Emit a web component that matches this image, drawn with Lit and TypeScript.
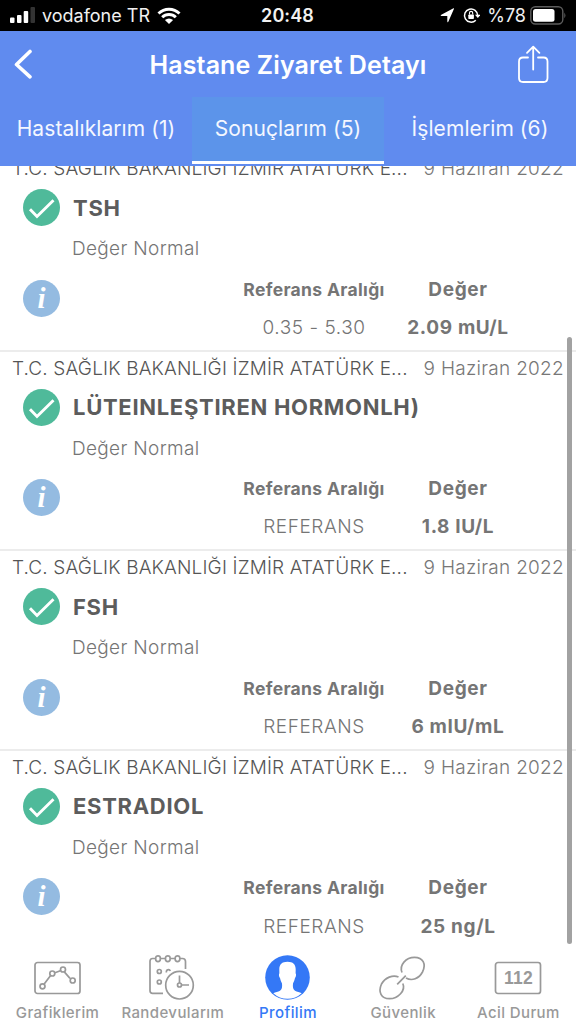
import { LitElement, html, css, svg } from 'lit';
import { customElement, property } from 'lit/decorators.js';
import { classMap } from 'lit/directives/class-map.js';

interface Result {
  name: string;
  status: string;
  range: string;
  value: string;
}

const HOSPITAL = 'T.C. SAĞLIK BAKANLIĞI İZMİR ATATÜRK E...';
const DATE = '9 Haziran 2022';

const RESULTS: Result[] = [
  { name: 'TSH', status: 'Değer Normal', range: '0.35 - 5.30', value: '2.09 mU/L' },
  { name: 'LÜTEINLEŞTIREN HORMONLH)', status: 'Değer Normal', range: 'REFERANS', value: '1.8 IU/L' },
  { name: 'FSH', status: 'Değer Normal', range: 'REFERANS', value: '6 mIU/mL' },
  { name: 'ESTRADIOL', status: 'Değer Normal', range: 'REFERANS', value: '25 ng/L' },
];

const TABS = [
  { label: 'Hastalıklarım (1)', active: false },
  { label: 'Sonuçlarım (5)', active: true },
  { label: 'İşlemlerim (6)', active: false },
];

const chartIcon = svg`
  <rect x="8" y="8.5" width="45" height="31" rx="2.5"/>
  <path d="M17 30.300 23.800 21.200M28 18.700 33.300 16.700M37.300 17.900 43 24.400"/>
  <circle cx="15.500" cy="32.300" r="2.500"/><circle cx="25.300" cy="19.500" r="2.500"/>
  <circle cx="36" cy="15.500" r="2.500"/><circle cx="45.700" cy="26.500" r="2.500"/>`;

const calendarIcon = svg`
  <path d="M20 39.300H9.500Q7 39.300 7 36.800V7.300Q7 4.500 9.500 4.500H12.500M17.500 4.500H22.500M27.500 4.500H32M37 4.500H39.500Q42.500 4.500 42.500 7.500V15"/>
  <rect x="12.700" y="1.800" width="4.600" height="5.800" rx="2.300"/>
  <rect x="22.500" y="1.800" width="4.600" height="5.800" rx="2.300"/>
  <rect x="32.200" y="1.800" width="4.600" height="5.800" rx="2.300"/>
  <circle cx="16.300" cy="17.500" r="2"/><path d="M23.500 18.500A2 2 0 1 1 27.300 17"/>
  <circle cx="16.300" cy="28" r="2"/>
  <circle cx="36.500" cy="31.200" r="13.800"/>
  <circle cx="36.500" cy="31" r="2"/><path d="M36.500 29V21.500M38.500 31H46"/>`;

const profileIcon = svg`
  <circle class="solid" cx="30.500" cy="23.500" r="22.300"/>
  <path class="cut" d="M30.500 7.800C25 7.800 22.200 10.500 22.300 15.500C22.300 17.500 22.500 18.500 22.300 19.500C21.600 20.300 22 23 23 24C23.600 26.500 24.300 28 25 29.500C25.400 33 25 35.500 23 36.800C21 38 18.500 38 16.300 39.300A21 21 0 0 0 44.700 39.300C42.500 38 40 38 38 36.800C36 35.500 35.600 33 36 29.500C36.700 28 37.400 26.500 38 24C39 23 39.400 20.300 38.700 19.500C38.500 18.500 38.700 17.500 38.700 15.500C38.800 10.500 36 7.800 30.500 7.800Z"/>`;

const linkIcon = svg`
  <path d="M34 24C40 27.500 47 24.500 50.500 18C54.500 10 51 3.300 42.500 3.300C34 3.300 27 11 30 18.500"/>
  <path d="M26.500 23C21 20.500 13 23.500 9.500 30C6 38 9 44.700 17.500 44.700C26 44.700 34 36.500 30.800 29.500"/>
  <path d="M25.200 30.300 33.800 21.700"/>`;

const emergencyIcon = svg`
  <rect x="7.500" y="8.500" width="45" height="31" rx="2.500"/>
  <text x="30.500" y="30">112</text>`;

const NAV = [
  { label: 'Grafiklerim', icon: chartIcon, width: 62, active: false },
  { label: 'Randevularım', icon: calendarIcon, width: 60, active: false },
  { label: 'Profilim', icon: profileIcon, width: 62, active: true },
  { label: 'Güvenlik', icon: linkIcon, width: 62, active: false },
  { label: 'Acil Durum', icon: emergencyIcon, width: 60, active: false },
];

@customElement('status-bar')
export class StatusBar extends LitElement {
  static styles = css`
    :host {
      display: grid;
      grid-template-columns: 1fr auto 1fr;
      align-items: center;
      height: 31px;
      padding: 0 10px 0 10px;
      background: #000;
      color: #f1f1f1;
      font-size: 18px;
    }
    .side {
      display: flex;
      align-items: center;
    }
    .right {
      justify-content: flex-end;
    }
    .signal {
      margin-bottom: 1px;
    }
    .carrier {
      margin: 0 7px 0 7px;
    }
    .time {
      margin-right: 1px;
      font-weight: 600;
      font-size: 18px;
      letter-spacing: 0.1px;
    }
    .battery-label {
      margin: 0 4px 0 7px;
    }
    svg {
      display: block;
      fill: #fff;
    }
    .dim {
      fill: #333;
    }
    .line {
      fill: none;
      stroke: #fff;
    }
    .case {
      fill: none;
      stroke: #5c5c5c;
    }
    .tip {
      fill: #5c5c5c;
    }
  `;

  render() {
    return html`
      <div class="side">
        <svg class="signal" width="25" height="17" viewBox="0 0 25 17">
          <rect y="10.500" width="4.500" height="5.500" rx="1"/>
          <rect x="7" y="8" width="4.500" height="8" rx="1"/>
          <rect x="13.700" y="4" width="4.500" height="12" rx="1"/>
          <rect class="dim" x="20.500" y="0" width="4.500" height="16" rx="1"/>
        </svg>
        <span class="carrier">vodafone TR</span>
        <svg width="24" height="18" viewBox="0 0 24 18">
          <path class="line" stroke-width="3" d="M1.500 6.500A15 15 0 0 1 22.500 6.500M5.200 10.300A9.700 9.700 0 0 1 18.800 10.300"/>
          <path d="M12 17 7.900 13Q12 9.800 16.100 13Z"/>
        </svg>
      </div>
      <span class="time">20:48</span>
      <div class="side right">
        <svg width="15" height="15" viewBox="0 0 15 15"><path d="M14 .8 8.300 13.700Q7.500 15 7.300 13.500V8H1.500Q-.2 7.700 1.300 6.800L13 .6Q14.300 0 14 .8Z"/></svg>
        <svg width="25" height="17" viewBox="-8 0 25 17">
          <path class="line" stroke-width="1.500" d="M14.700 8.500A6.600 6.600 0 1 0 12.800 13.200"/>
          <path d="M12 7.800H17.500L14.800 11Z"/>
          <rect x="5.300" y="7.500" width="5.600" height="4.500" rx=".7"/>
          <path class="line" stroke-width="1.100" d="M6.500 7.500V6A1.600 1.600 0 0 1 9.700 6V7.500"/>
        </svg>
        <span class="battery-label">%78</span>
        <svg width="36" height="19" viewBox="0 0 36 19">
          <rect class="case" x=".8" y=".8" width="32" height="17.200" rx="4.500" stroke-width="1.400"/>
          <rect x="3" y="3" width="21.500" height="12.800" rx="2.500"/>
          <path class="tip" d="M34.300 6.500Q36.500 9.400 34.300 12.300Z"/>
        </svg>
      </div>
    `;
  }
}

@customElement('result-row')
export class ResultRow extends LitElement {
  @property({ type: Object }) result!: Result;

  static styles = css`
    :host {
      display: block;
      box-sizing: border-box;
      flex: none;
      height: 199.6px;
      border-top: 2px solid #ececec;
      color: #757575;
      white-space: nowrap;
    }
    .place {
      display: flex;
      justify-content: space-between;
      height: 35px;
      padding: 0 12px 0 13px;
      line-height: 34.6px;
      font-size: 19px;
      font-weight: 300;
    }
    .hospital {
      margin-left: -1px;
      color: #555;
      letter-spacing: 0.16px;
    }
    .date {
      color: #777;
      letter-spacing: 0.28px;
    }
    .name {
      display: flex;
      align-items: center;
      gap: 13px;
      height: 41px;
      padding-left: 23px;
      color: #5c5c5c;
      font-size: 22px;
      font-weight: 700;
      letter-spacing: 0.7px;
    }
    .status {
      height: 40px;
      padding-left: 72px;
      line-height: 42px;
      font-size: 19px;
      font-weight: 300;
      letter-spacing: 0.33px;
    }
    .details {
      display: grid;
      grid-template-columns: 242px 144px 144px;
      padding-top: 2.6px;
      line-height: 38.2px;
      text-align: center;
    }
    .info {
      display: block;
      grid-row: span 2;
      margin: 9px 0 0 23px;
    }
    .range-label {
      font-size: 17.5px;
      font-weight: 700;
      letter-spacing: 0.33px;
    }
    .value-label,
    .value {
      font-size: 19px;
      font-weight: 700;
      letter-spacing: 0.65px;
    }
    .range {
      font-size: 19px;
      font-weight: 300;
      letter-spacing: 0.55px;
    }
    .disc {
      fill: #4fba9a;
    }
    .tick {
      fill: none;
      stroke: #fff;
      stroke-width: 2.9;
    }
    .info-disc {
      fill: #94bbe1;
    }
    .info text {
      fill: #fff;
      font: italic 700 29px 'Liberation Serif', serif;
      letter-spacing: 0;
      text-anchor: middle;
    }
  `;

  render() {
    const { name, status, range, value } = this.result;
    return html`
      <div class="place">
        <span class="hospital">${HOSPITAL}</span>
        <span class="date">${DATE}</span>
      </div>
      <div class="name">
        <svg width="37" height="37" viewBox="0 0 37 37">
          <circle class="disc" cx="18.500" cy="18.500" r="18.500"/>
          <path class="tick" d="M7 20.300 14 27.500 30.500 11.300"/>
        </svg>
        <span class="title">${name}</span>
      </div>
      <div class="status">${status}</div>
      <div class="details">
        <svg class="info" width="37" height="37" viewBox="0 0 37 37">
          <circle class="info-disc" cx="18.500" cy="18.500" r="18.500"/>
          <text x="18.500" y="28">i</text>
        </svg>
        <span class="range-label">Referans Aralığı</span>
        <span class="value-label">Değer</span>
        <span class="range">${range}</span>
        <span class="value">${value}</span>
      </div>
    `;
  }
}

@customElement('bottom-nav')
export class BottomNav extends LitElement {
  static styles = css`
    :host {
      display: grid;
      grid-template-columns: repeat(5, 1fr);
      height: 76px;
      padding-top: 5px;
      box-sizing: border-box;
      background: #fff;
      color: #999;
    }
    .item {
      display: flex;
      flex-direction: column;
      align-items: center;
      font-size: 15px;
      font-weight: 500;
      letter-spacing: 0.4px;
      white-space: nowrap;
    }
    .active {
      color: #3478f6;
    }
    svg {
      overflow: visible;
      flex: none;
      fill: none;
      stroke: currentColor;
      stroke-width: 1.7;
    }
    .label {
      margin-top: 4px;
      line-height: 20px;
    }
    .solid {
      fill: currentColor;
      stroke: none;
    }
    .cut {
      fill: #fff;
      stroke: none;
    }
    text {
      fill: currentColor;
      stroke: none;
      font-family: 'Liberation Sans', sans-serif;
      font-size: 17.5px;
      font-weight: 700;
      letter-spacing: 0.3px;
      text-anchor: middle;
    }
  `;

  render() {
    return html`
      ${NAV.map(item => html`
        <div class=${classMap({ item: true, active: item.active })}>
          <svg width=${item.width} height="46" viewBox="0 -1 ${item.width} 46">${item.icon}</svg>
          <span class="label">${item.label}</span>
        </div>
      `)}
    `;
  }
}

@customElement('app-root')
export class AppRoot extends LitElement {
  static styles = css`
    :host {
      display: flex;
      flex-direction: column;
      width: 576px;
      height: 1024px;
      overflow: hidden;
      background: #fff;
      font-family: Inter, 'Liberation Sans', sans-serif;
    }
    status-bar {
      flex: none;
    }
    header {
      flex: none;
      height: 135px;
      background: #608bef;
      color: #fff;
    }
    .title-bar {
      display: grid;
      grid-template-columns: 60px 1fr 60px;
      align-items: center;
      height: 66px;
    }
    h1 {
      margin: 2px 0 0;
      text-align: center;
      font-size: 25px;
      font-weight: 600;
      line-height: 30px;
      letter-spacing: 0.12px;
    }
    svg {
      display: block;
      fill: none;
      stroke: #fff;
    }
    .back {
      margin-left: 14px;
    }
    .share {
      margin-left: 1px;
    }
    nav {
      display: grid;
      grid-template-columns: repeat(3, 1fr);
      height: 67px;
    }
    .tab {
      border-bottom: 3px solid transparent;
      text-align: center;
      line-height: 63px;
      font-size: 21px;
      letter-spacing: 0.08px;
      color: #f4f7ff;
      white-space: nowrap;
    }
    .current {
      background: #5c94ea;
      border-bottom-color: #fff;
    }
    main {
      position: relative;
      flex: 1;
      min-height: 0;
      overflow: hidden;
    }
    .list {
      display: flex;
      flex-direction: column;
      margin-top: -16px;
    }
    /* scroll indicator floats over the rows */
    .thumb {
      position: absolute;
      top: 171px;
      right: 4px;
      width: 5px;
      height: 607px;
      border-radius: 3px;
      background: #a2a2a2;
    }
    bottom-nav {
      flex: none;
    }
  `;

  render() {
    return html`
      <status-bar></status-bar>
      <header>
        <div class="title-bar">
          <svg class="back" width="20" height="32" viewBox="0 0 20 32"><path stroke-width="3.600" stroke-linecap="round" stroke-linejoin="round" d="M16 3.500 2.500 16.500 16 28.800"/></svg>
          <h1>Hastane Ziyaret Detayı</h1>
          <svg class="share" width="32" height="38" viewBox="0 0 32 38"><path stroke-width="1.800" stroke-linecap="round" stroke-linejoin="round" d="M11 12.500H6Q2 12.500 2 16.500V33Q2 37 6 37H26.500Q30.500 37 30.500 33V16.500Q30.500 12.500 26.500 12.500H21M16.200 24.500V1.800M10 7.800 16.200 1.600 22.400 7.800"/></svg>
        </div>
        <nav>
          ${TABS.map(tab => html`
            <div class=${classMap({ tab: true, current: tab.active })}>${tab.label}</div>
          `)}
        </nav>
      </header>
      <main>
        <div class="list">
          ${RESULTS.map(result => html`<result-row .result=${result}></result-row>`)}
        </div>
        <div class="thumb"></div>
      </main>
      <bottom-nav></bottom-nav>
    `;
  }
}
